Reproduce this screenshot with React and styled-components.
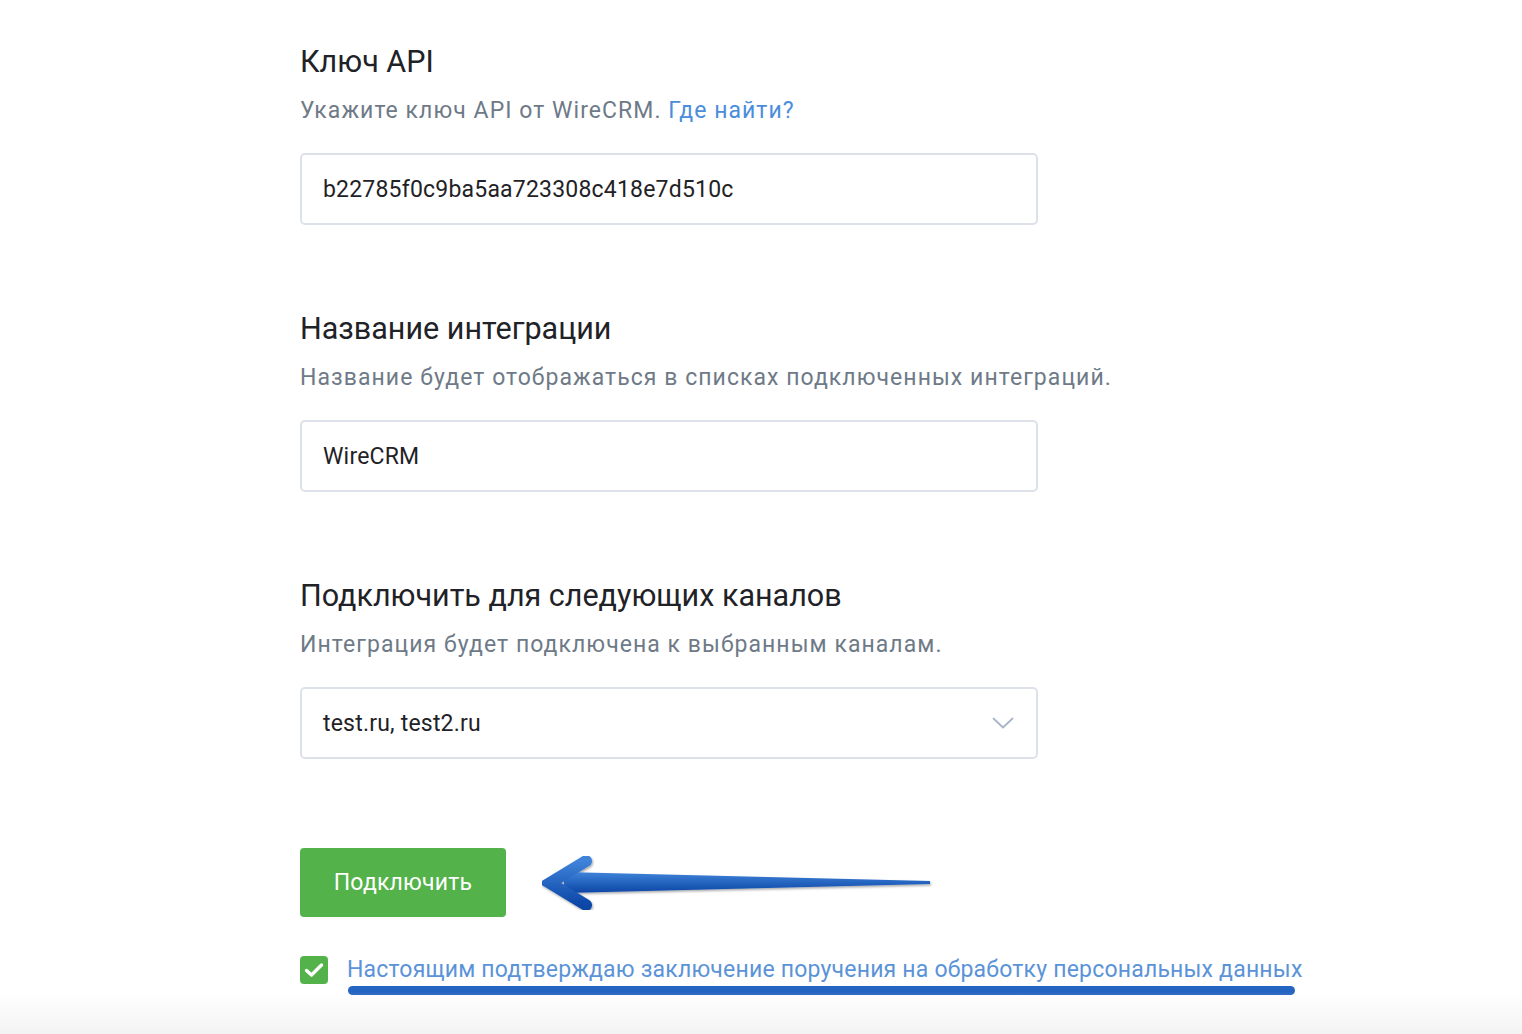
import React from "react";
import styled, { createGlobalStyle } from "styled-components";

const Global = createGlobalStyle`
  html, body { margin: 0; padding: 0; background: #ffffff; }
  body { font-family: Roboto, "Noto Sans", "Liberation Sans", sans-serif; -webkit-font-smoothing: antialiased; }
  * { box-sizing: border-box; }
`;

const Page = styled.div`
  min-height: 1034px;
  padding: 44px 0 0 300px;
  display: flex;
  flex-direction: column;
`;

const Section = styled.section`
  display: flex;
  flex-direction: column;
  width: 738px;
  margin-bottom: 86px;
`;

const Title = styled.h2`
  margin: 0;
  font-size: 30.5px;
  line-height: 36px;
  font-weight: 400;
  color: #1f2226;
`;

const Hint = styled.p`
  margin: 16px 0 0;
  font-size: 23px;
  line-height: 30px;
  letter-spacing: 1.05px;
  color: #6e7a87;
  white-space: nowrap;
`;

const Link = styled.a`
  color: #4a8ddc;
  text-decoration: none;
`;

const Field = styled.div`
  margin-top: 27px;
  height: 72px;
  border: 2px solid #dde2ea;
  border-radius: 5px;
  display: flex;
  align-items: center;
  justify-content: space-between;
  padding: 0 22px 0 21px;
  font-size: 23px;
  color: #1f2226;
`;

const Value = styled.span`
  letter-spacing: 0.2px;
`;

const Chevron = styled.svg`
  width: 22px;
  height: 12px;
  flex: none;
`;

const Actions = styled.div`
  display: flex;
  align-items: center;
  gap: 36px;
  margin-top: 3px;
`;

const Button = styled.button`
  width: 206px;
  height: 69px;
  border: none;
  border-radius: 4px;
  background: #53b24a;
  color: #ffffff;
  font-family: inherit;
  font-size: 23px;
  letter-spacing: 0.2px;
  cursor: pointer;
`;

const Arrow = styled.svg`
  width: 396px;
  height: 54px;
  display: block;
`;

const Consent = styled.label`
  display: flex;
  align-items: center;
  gap: 19px;
  margin-top: 38px;
`;

const Box = styled.span`
  width: 28px;
  height: 28px;
  border-radius: 4px;
  background: #53b24a;
  display: flex;
  align-items: center;
  justify-content: center;
  flex: none;
`;

const ConsentText = styled.span`
  position: relative;
  font-size: 23px;
  line-height: 30px;
  letter-spacing: 0.2px;
  color: #5b93d8;
  white-space: nowrap;
  &::after {
    content: "";
    position: absolute;
    left: 1px;
    right: 8px;
    top: 31px;
    height: 9px;
    border-radius: 4.5px;
    background: #2565c2;
  }
`;

const FooterShade = styled.div`
  position: fixed;
  left: 0;
  right: 0;
  bottom: 0;
  height: 42px;
  pointer-events: none;
  background: linear-gradient(to bottom, rgba(245, 245, 245, 0), #f3f3f3);
`;

export default function App() {
  return (
    <>
      <Global />
      <Page>
        <Section>
          <Title>Ключ API</Title>
          <Hint>
            Укажите ключ API от WireCRM. <Link href="#">Где найти?</Link>
          </Hint>
          <Field>
            <Value>b22785f0c9ba5aa723308c418e7d510c</Value>
          </Field>
        </Section>

        <Section>
          <Title>Название интеграции</Title>
          <Hint>Название будет отображаться в списках подключенных интеграций.</Hint>
          <Field>
            <Value>WireCRM</Value>
          </Field>
        </Section>

        <Section>
          <Title>Подключить для следующих каналов</Title>
          <Hint>Интеграция будет подключена к выбранным каналам.</Hint>
          <Field>
            <Value>test.ru, test2.ru</Value>
            <Chevron viewBox="0 0 22 12">
              <path d="M1.5 1.5 L11 10.5 L20.5 1.5" fill="none" stroke="#a9b5c5" strokeWidth="1.8" strokeLinecap="round" strokeLinejoin="round" />
            </Chevron>
          </Field>
        </Section>

        <Actions>
          <Button>Подключить</Button>
          <Arrow viewBox="0 0 396 54">
            <defs>
              <linearGradient id="arrowGrad" x1="0" y1="0" x2="0" y2="1">
                <stop offset="0" stopColor="#3f83d9" />
                <stop offset="1" stopColor="#0c46a6" />
              </linearGradient>
              <filter id="arrowShadow" x="-5%" y="-20%" width="110%" height="150%">
                <feDropShadow dx="1" dy="1.5" stdDeviation="1" floodColor="#000" floodOpacity="0.35" />
              </filter>
            </defs>
            <g filter="url(#arrowShadow)">
              <path d="M22 16 L388 25 L388 28 L22 37 Z" fill="url(#arrowGrad)" />
              <path d="M44 5 L8 27 L44 49" fill="none" stroke="url(#arrowGrad)" strokeWidth="12" strokeLinecap="round" strokeLinejoin="miter" />
            </g>
          </Arrow>
        </Actions>

        <Consent>
          <Box>
            <svg width="20" height="16" viewBox="0 0 20 16">
              <path d="M2.5 8.5 L7.5 13 L17.5 3" fill="none" stroke="#ffffff" strokeWidth="3.4" strokeLinecap="round" strokeLinejoin="round" />
            </svg>
          </Box>
          <ConsentText>Настоящим подтверждаю заключение поручения на обработку персональных данных</ConsentText>
        </Consent>
      </Page>
      <FooterShade />
    </>
  );
}
